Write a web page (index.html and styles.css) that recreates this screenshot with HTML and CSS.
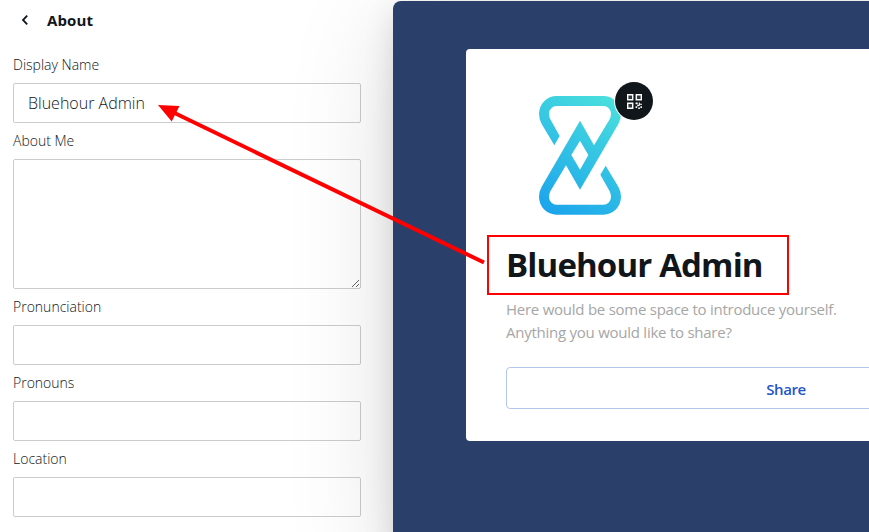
FILE: index.html
```html
<!DOCTYPE html>
<html lang="en">
<head>
    <meta charset="UTF-8">
    <meta name="viewport" content="width=device-width, initial-scale=1.0">
    <title>About</title>
    <link rel="stylesheet" href="styles.css">
</head>
<body>
    <div class="page">
        <form class="sidebar">
            <div class="header">
                <svg class="back" viewBox="0 0 8 12"><path d="M6.2 1.7 2 6l4.2 4.3"/></svg>
                <h2>About</h2>
            </div>

            <label for="displayName">Display Name</label>
            <input type="text" id="displayName" value="Bluehour Admin">

            <label for="aboutMe">About Me</label>
            <textarea id="aboutMe"></textarea>

            <label for="pronunciation">Pronunciation</label>
            <input type="text" id="pronunciation">

            <label for="pronouns">Pronouns</label>
            <input type="text" id="pronouns">

            <label for="location">Location</label>
            <input type="text" id="location">
        </form>

        <div class="preview">
            <div class="card">
                <div class="avatar">
                    <svg class="logo" viewBox="57 77 246 357">
                        <defs>
                            <linearGradient id="logoFill" gradientUnits="userSpaceOnUse" x1="75" y1="420" x2="285" y2="90">
                                <stop offset="0" stop-color="#1ba4ec"/>
                                <stop offset="1" stop-color="#49dfdd"/>
                            </linearGradient>
                        </defs>
                        <path fill="url(#logoFill)" fill-rule="evenodd" d="M103 225 65 161Q57 147 57 130A53 53 0 0 1 110 77H250A53 53 0 0 1 303 130Q303 147 295 161L180 358 138 285 91 363Q87 371 87 380A23 23 0 0 0 110 403H250A23 23 0 0 0 273 380Q273 371 269 363L241 313 257 286 295 349Q303 363 303 380A53 53 0 0 1 250 433H110A53 53 0 0 1 57 380Q57 363 65 349L180 151 222 225 269 147Q273 139 273 130A23 23 0 0 0 250 107H110A23 23 0 0 0 87 130Q87 139 91 147L119 197ZM180 211 154 254 180 298 205 254Z"/>
                    </svg>
                    <div class="qr-badge">
                        <svg viewBox="0 0 14 14">
                            <path class="qr-frame" d="M.65.65h4.700v4.700H.65zM8.650.65h4.700v4.700h-4.700zM.65 8.650h4.700v4.700H.65z"/>
                            <path class="qr-dots" d="M8 8h2v1.500H8zM11 8h1v1h2v1h-2v1h-1zM9.500 10H11v1.500H9.500zM8 11.500h1.500V13H8zM10.500 12.500H12V14h-1.500zM12.500 11.500H14V13h-1.500z"/>
                        </svg>
                    </div>
                </div>
                <h1>Bluehour Admin</h1>
                <p>Here would be some space to introduce yourself.<br>Anything you would like to share?</p>
                <button type="button">Share</button>
            </div>
        </div>

        <!-- callout linking the name field with the profile title -->
        <div class="highlight"></div>
        <svg class="arrow" viewBox="0 0 869 532">
            <path class="arrow-line" d="M484 262.500 172 111.800"/>
            <path class="arrow-head" d="M158 105 179.500 106 171.700 121.500Z"/>
        </svg>
    </div>
</body>
</html>
```
FILE: styles.css
```css
* {
    margin: 0;
    padding: 0;
    box-sizing: border-box;
}

body {
    font-family: 'Open Sans', 'Noto Sans', sans-serif;
    background: white;
    color: #10161a;
}

.page {
    position: relative;
    display: flex;
    width: 100%;
    height: 532px;
    overflow: hidden;
}

.sidebar {
    flex: 0 0 393px;
    padding: 8px 32px 0 13px;
}

.header {
    display: flex;
    align-items: center;
    gap: 18px;
    height: 24px;
    padding-left: 8px;
    margin-bottom: 21px;
}

.header h2 {
    font-size: 15px;
    font-weight: 700;
    letter-spacing: 0.1px;
}

.back {
    width: 8px;
    height: 12px;
    fill: none;
    stroke: #10161a;
    stroke-width: 1.8;
}

label {
    display: block;
    height: 24px;
    margin-bottom: 6px;
    font-size: 14px;
    font-weight: 300;
    line-height: 24px;
    color: #10161a;
}

input,
textarea {
    display: block;
    width: 348px;
    height: 40px;
    padding: 0 14px;
    margin-bottom: 6px;
    border: 1px solid #ccc;
    border-radius: 2px;
    background: transparent;
    font-family: inherit;
    font-size: 16px;
    font-weight: 300;
    color: #10161a;
    outline: none;
}

textarea {
    height: 130px;
    resize: vertical;
}

.preview {
    flex: 0 0 790px;
    height: 560px;
    margin-top: 1px;
    padding: 48px 0 0 73px;
    border-radius: 8px;
    background: #2b3f6b;
    box-shadow: 0 20px 110px rgba(0, 0, 0, 0.14), 0 12px 30px rgba(0, 0, 0, 0.12);
}

.card {
    width: 640px;
    height: 392px;
    padding: 47px 40px 0;
    border-radius: 4px;
    background: white;
}

.avatar {
    position: relative;
    width: 148px;
    height: 119px;
    padding-left: 33px;
}

.logo {
    display: block;
    width: 82px;
    height: 119px;
}

.qr-badge {
    position: absolute;
    top: -14px;
    left: 109px;
    display: flex;
    align-items: center;
    justify-content: center;
    width: 38px;
    height: 38px;
    border-radius: 50%;
    background: #10161a;
    box-shadow: 0 0 0 1px white;
}

.qr-badge svg {
    width: 15px;
    height: 15px;
}

.qr-frame {
    fill: #34393c;
    stroke: white;
    stroke-width: 1.3;
}

.qr-dots {
    fill: white;
}

.card h1 {
    height: 48px;
    margin-top: 26px;
    font-size: 33px;
    font-weight: 700;
    line-height: 48px;
    letter-spacing: -0.85px;
    white-space: nowrap;
}

.card p {
    margin-top: 9px;
    font-size: 15px;
    line-height: 23px;
    letter-spacing: -0.25px;
    color: #a6a6a6;
    white-space: nowrap;
}

.card button {
    display: block;
    width: 560px;
    height: 42px;
    margin-top: 23px;
    padding-top: 2px;
    border: 1px solid #b5c6ec;
    border-radius: 4px;
    background: white;
    font-family: inherit;
    font-size: 15px;
    font-weight: 600;
    letter-spacing: -0.4px;
    color: #2456c9;
}

.highlight {
    position: absolute;
    top: 235px;
    left: 487px;
    width: 302px;
    height: 60px;
    border: 2px solid #f00;
}

.arrow {
    position: absolute;
    top: 0;
    left: 0;
    width: 869px;
    height: 532px;
    pointer-events: none;
}

.arrow-line {
    fill: none;
    stroke: #f00;
    stroke-width: 4;
}

.arrow-head {
    fill: #f00;
}
```
